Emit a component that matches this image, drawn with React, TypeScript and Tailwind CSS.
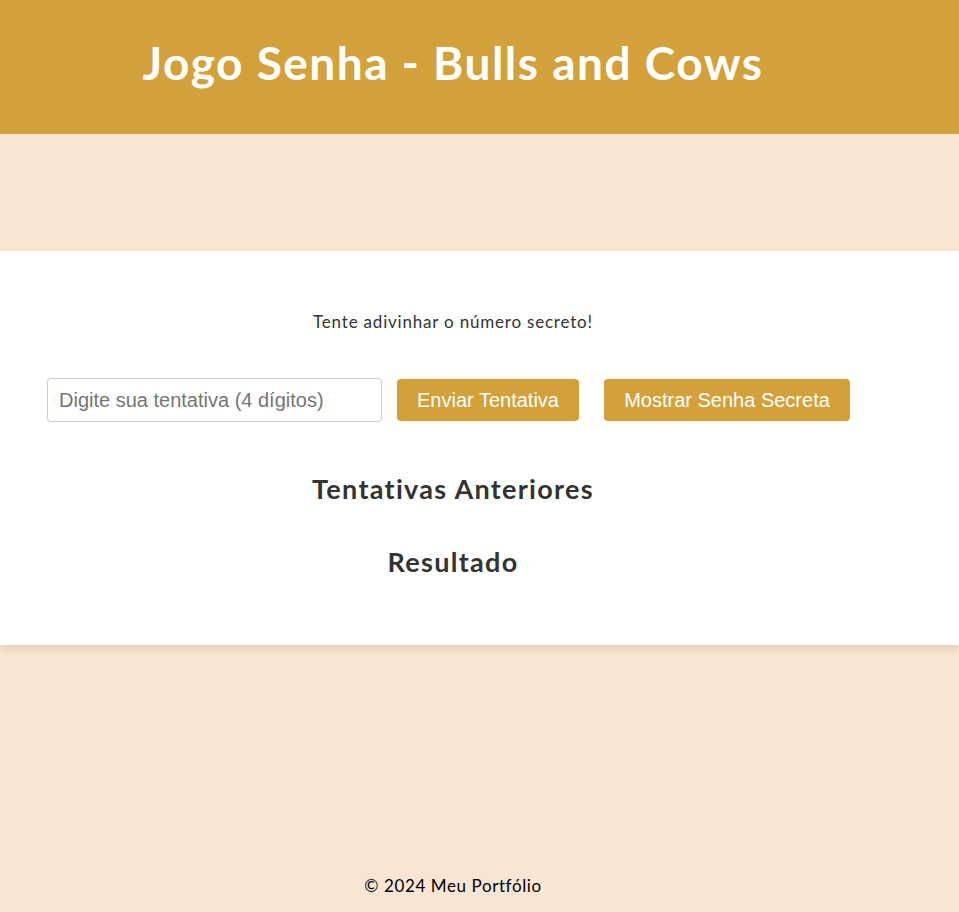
import React from "react";

const spartan = { fontFamily: "Lato, 'Open Sans', sans-serif" };

export default function App() {
  return (
    <div className="min-h-[912px] bg-[#f9e5d3] flex flex-col font-['Lato',sans-serif]">
      <header className="bg-[#d3a13a] h-[134px] flex items-center">
        <div className="w-[906px] text-center">
          <h1 className="text-[46px] font-bold text-white tracking-[1.5px] leading-none pb-[8px]">
            Jogo Senha - Bulls and Cows
          </h1>
        </div>
      </header>

      <div className="h-[117px]" />

      <main className="bg-white shadow-[0_4px_8px_rgba(0,0,0,0.1)] pt-[59px] pb-[67px]">
        <div className="w-[906px] flex flex-col items-center text-[#333]">
          <p className="text-[17px] leading-[24px] tracking-[0.8px]">Tente adivinhar o número secreto!</p>
        </div>

        <div className="flex items-center pl-[47px] mt-[44px]">
          <input
            type="text"
            placeholder="Digite sua tentativa (4 dígitos)"
            className="w-[335px] h-[44px] border border-[#ccc] rounded-[4px] px-[11px] text-[20px] font-['Liberation_Sans',Arial,sans-serif] placeholder:text-[#757575] outline-none"
          />
          <button className="ml-[15px] h-[42px] w-[182px] bg-[#d3a13a] text-white rounded-[4px] text-[20px] font-['Liberation_Sans',Arial,sans-serif]">
            Enviar Tentativa
          </button>
          <button className="ml-[25px] h-[42px] w-[246px] bg-[#d3a13a] text-white rounded-[4px] text-[20px] font-['Liberation_Sans',Arial,sans-serif]">
            Mostrar Senha Secreta
          </button>
        </div>

        <div className="w-[906px] flex flex-col items-center text-[#333]" style={spartan}>
          <h2 className="mt-[51px] text-[27px] font-bold leading-[32px] tracking-[1.3px]">Tentativas Anteriores</h2>
          <h2 className="mt-[41px] text-[27px] font-bold leading-[32px] tracking-[1.3px]">Resultado</h2>
        </div>
      </main>

      <footer className="mt-auto w-[906px] text-center pb-[14px] text-[17px] tracking-[0.6px] text-black">
        © 2024 Meu Portfólio
      </footer>
    </div>
  );
}
